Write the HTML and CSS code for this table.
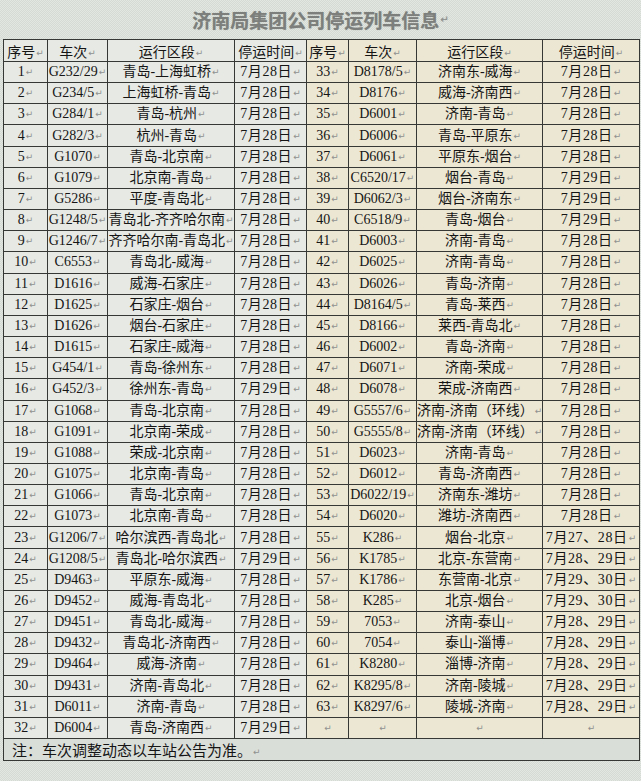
FILE: index.html
```
<!DOCTYPE html>
<html lang="zh-CN">
<head>
<meta charset="utf-8">
<title>济南局集团公司停运列车信息</title>
<link rel="stylesheet" href="styles.css">
</head>
<body>
<div class="title">济南局集团公司停运列车信息<span class="pm">↵</span></div>
<table class="sheet">
<colgroup>
<col class="c1"><col class="c2"><col class="c3"><col class="c4"><col class="c5"><col class="c6"><col class="c7"><col class="c8">
</colgroup>
<thead>
<tr class="head">
<th class="l">序号<span class="pm">↵</span></th><th class="l">车次<span class="pm">↵</span></th><th class="l">运行区段<span class="pm">↵</span></th><th class="l">停运时间<span class="pm">↵</span></th>
<th class="r">序号<span class="pm">↵</span></th><th class="r">车次<span class="pm">↵</span></th><th class="r">运行区段<span class="pm">↵</span></th><th class="r">停运时间<span class="pm">↵</span></th>
</tr>
</thead>
<tbody>
<tr><td class="l">1<span class="pm">↵</span></td><td class="l">G232/29<span class="pm">↵</span></td><td class="l">青岛-上海虹桥<span class="pm">↵</span></td><td class="l">7月28日<span class="pm">↵</span></td><td class="r">33<span class="pm">↵</span></td><td class="r">D8178/5<span class="pm">↵</span></td><td class="r">济南东-威海<span class="pm">↵</span></td><td class="r">7月28日<span class="pm">↵</span></td></tr>
<tr><td class="l">2<span class="pm">↵</span></td><td class="l">G234/5<span class="pm">↵</span></td><td class="l">上海虹桥-青岛<span class="pm">↵</span></td><td class="l">7月28日<span class="pm">↵</span></td><td class="r">34<span class="pm">↵</span></td><td class="r">D8176<span class="pm">↵</span></td><td class="r">威海-济南西<span class="pm">↵</span></td><td class="r">7月28日<span class="pm">↵</span></td></tr>
<tr><td class="l">3<span class="pm">↵</span></td><td class="l">G284/1<span class="pm">↵</span></td><td class="l">青岛-杭州<span class="pm">↵</span></td><td class="l">7月28日<span class="pm">↵</span></td><td class="r">35<span class="pm">↵</span></td><td class="r">D6001<span class="pm">↵</span></td><td class="r">济南-青岛<span class="pm">↵</span></td><td class="r">7月28日<span class="pm">↵</span></td></tr>
<tr><td class="l">4<span class="pm">↵</span></td><td class="l">G282/3<span class="pm">↵</span></td><td class="l">杭州-青岛<span class="pm">↵</span></td><td class="l">7月28日<span class="pm">↵</span></td><td class="r">36<span class="pm">↵</span></td><td class="r">D6006<span class="pm">↵</span></td><td class="r">青岛-平原东<span class="pm">↵</span></td><td class="r">7月28日<span class="pm">↵</span></td></tr>
<tr><td class="l">5<span class="pm">↵</span></td><td class="l">G1070<span class="pm">↵</span></td><td class="l">青岛-北京南<span class="pm">↵</span></td><td class="l">7月28日<span class="pm">↵</span></td><td class="r">37<span class="pm">↵</span></td><td class="r">D6061<span class="pm">↵</span></td><td class="r">平原东-烟台<span class="pm">↵</span></td><td class="r">7月28日<span class="pm">↵</span></td></tr>
<tr><td class="l">6<span class="pm">↵</span></td><td class="l">G1079<span class="pm">↵</span></td><td class="l">北京南-青岛<span class="pm">↵</span></td><td class="l">7月28日<span class="pm">↵</span></td><td class="r">38<span class="pm">↵</span></td><td class="r">C6520/17<span class="pm">↵</span></td><td class="r">烟台-青岛<span class="pm">↵</span></td><td class="r">7月29日<span class="pm">↵</span></td></tr>
<tr><td class="l">7<span class="pm">↵</span></td><td class="l">G5286<span class="pm">↵</span></td><td class="l">平度-青岛北<span class="pm">↵</span></td><td class="l">7月28日<span class="pm">↵</span></td><td class="r">39<span class="pm">↵</span></td><td class="r">D6062/3<span class="pm">↵</span></td><td class="r">烟台-济南东<span class="pm">↵</span></td><td class="r">7月29日<span class="pm">↵</span></td></tr>
<tr><td class="l">8<span class="pm">↵</span></td><td class="l">G1248/5<span class="pm">↵</span></td><td class="l">青岛北-齐齐哈尔南<span class="pm">↵</span></td><td class="l">7月28日<span class="pm">↵</span></td><td class="r">40<span class="pm">↵</span></td><td class="r">C6518/9<span class="pm">↵</span></td><td class="r">青岛-烟台<span class="pm">↵</span></td><td class="r">7月29日<span class="pm">↵</span></td></tr>
<tr><td class="l">9<span class="pm">↵</span></td><td class="l">G1246/7<span class="pm">↵</span></td><td class="l">齐齐哈尔南-青岛北<span class="pm">↵</span></td><td class="l">7月28日<span class="pm">↵</span></td><td class="r">41<span class="pm">↵</span></td><td class="r">D6003<span class="pm">↵</span></td><td class="r">济南-青岛<span class="pm">↵</span></td><td class="r">7月28日<span class="pm">↵</span></td></tr>
<tr><td class="l">10<span class="pm">↵</span></td><td class="l">C6553<span class="pm">↵</span></td><td class="l">青岛北-威海<span class="pm">↵</span></td><td class="l">7月28日<span class="pm">↵</span></td><td class="r">42<span class="pm">↵</span></td><td class="r">D6025<span class="pm">↵</span></td><td class="r">济南-青岛<span class="pm">↵</span></td><td class="r">7月28日<span class="pm">↵</span></td></tr>
<tr><td class="l">11<span class="pm">↵</span></td><td class="l">D1616<span class="pm">↵</span></td><td class="l">威海-石家庄<span class="pm">↵</span></td><td class="l">7月28日<span class="pm">↵</span></td><td class="r">43<span class="pm">↵</span></td><td class="r">D6026<span class="pm">↵</span></td><td class="r">青岛-济南<span class="pm">↵</span></td><td class="r">7月28日<span class="pm">↵</span></td></tr>
<tr><td class="l">12<span class="pm">↵</span></td><td class="l">D1625<span class="pm">↵</span></td><td class="l">石家庄-烟台<span class="pm">↵</span></td><td class="l">7月28日<span class="pm">↵</span></td><td class="r">44<span class="pm">↵</span></td><td class="r">D8164/5<span class="pm">↵</span></td><td class="r">青岛-莱西<span class="pm">↵</span></td><td class="r">7月28日<span class="pm">↵</span></td></tr>
<tr><td class="l">13<span class="pm">↵</span></td><td class="l">D1626<span class="pm">↵</span></td><td class="l">烟台-石家庄<span class="pm">↵</span></td><td class="l">7月28日<span class="pm">↵</span></td><td class="r">45<span class="pm">↵</span></td><td class="r">D8166<span class="pm">↵</span></td><td class="r">莱西-青岛北<span class="pm">↵</span></td><td class="r">7月28日<span class="pm">↵</span></td></tr>
<tr><td class="l">14<span class="pm">↵</span></td><td class="l">D1615<span class="pm">↵</span></td><td class="l">石家庄-威海<span class="pm">↵</span></td><td class="l">7月28日<span class="pm">↵</span></td><td class="r">46<span class="pm">↵</span></td><td class="r">D6002<span class="pm">↵</span></td><td class="r">青岛-济南<span class="pm">↵</span></td><td class="r">7月28日<span class="pm">↵</span></td></tr>
<tr><td class="l">15<span class="pm">↵</span></td><td class="l">G454/1<span class="pm">↵</span></td><td class="l">青岛-徐州东<span class="pm">↵</span></td><td class="l">7月28日<span class="pm">↵</span></td><td class="r">47<span class="pm">↵</span></td><td class="r">D6071<span class="pm">↵</span></td><td class="r">济南-荣成<span class="pm">↵</span></td><td class="r">7月28日<span class="pm">↵</span></td></tr>
<tr><td class="l">16<span class="pm">↵</span></td><td class="l">G452/3<span class="pm">↵</span></td><td class="l">徐州东-青岛<span class="pm">↵</span></td><td class="l">7月29日<span class="pm">↵</span></td><td class="r">48<span class="pm">↵</span></td><td class="r">D6078<span class="pm">↵</span></td><td class="r">荣成-济南西<span class="pm">↵</span></td><td class="r">7月28日<span class="pm">↵</span></td></tr>
<tr><td class="l">17<span class="pm">↵</span></td><td class="l">G1068<span class="pm">↵</span></td><td class="l">青岛-北京南<span class="pm">↵</span></td><td class="l">7月28日<span class="pm">↵</span></td><td class="r">49<span class="pm">↵</span></td><td class="r">G5557/6<span class="pm">↵</span></td><td class="r">济南-济南（环线）<span class="pm">↵</span></td><td class="r">7月28日<span class="pm">↵</span></td></tr>
<tr><td class="l">18<span class="pm">↵</span></td><td class="l">G1091<span class="pm">↵</span></td><td class="l">北京南-荣成<span class="pm">↵</span></td><td class="l">7月28日<span class="pm">↵</span></td><td class="r">50<span class="pm">↵</span></td><td class="r">G5555/8<span class="pm">↵</span></td><td class="r">济南-济南（环线）<span class="pm">↵</span></td><td class="r">7月28日<span class="pm">↵</span></td></tr>
<tr><td class="l">19<span class="pm">↵</span></td><td class="l">G1088<span class="pm">↵</span></td><td class="l">荣成-北京南<span class="pm">↵</span></td><td class="l">7月28日<span class="pm">↵</span></td><td class="r">51<span class="pm">↵</span></td><td class="r">D6023<span class="pm">↵</span></td><td class="r">济南-青岛<span class="pm">↵</span></td><td class="r">7月28日<span class="pm">↵</span></td></tr>
<tr><td class="l">20<span class="pm">↵</span></td><td class="l">G1075<span class="pm">↵</span></td><td class="l">北京南-青岛<span class="pm">↵</span></td><td class="l">7月28日<span class="pm">↵</span></td><td class="r">52<span class="pm">↵</span></td><td class="r">D6012<span class="pm">↵</span></td><td class="r">青岛-济南西<span class="pm">↵</span></td><td class="r">7月28日<span class="pm">↵</span></td></tr>
<tr><td class="l">21<span class="pm">↵</span></td><td class="l">G1066<span class="pm">↵</span></td><td class="l">青岛-北京南<span class="pm">↵</span></td><td class="l">7月28日<span class="pm">↵</span></td><td class="r">53<span class="pm">↵</span></td><td class="r">D6022/19<span class="pm">↵</span></td><td class="r">济南东-潍坊<span class="pm">↵</span></td><td class="r">7月28日<span class="pm">↵</span></td></tr>
<tr><td class="l">22<span class="pm">↵</span></td><td class="l">G1073<span class="pm">↵</span></td><td class="l">北京南-青岛<span class="pm">↵</span></td><td class="l">7月28日<span class="pm">↵</span></td><td class="r">54<span class="pm">↵</span></td><td class="r">D6020<span class="pm">↵</span></td><td class="r">潍坊-济南西<span class="pm">↵</span></td><td class="r">7月28日<span class="pm">↵</span></td></tr>
<tr><td class="l">23<span class="pm">↵</span></td><td class="l">G1206/7<span class="pm">↵</span></td><td class="l">哈尔滨西-青岛北<span class="pm">↵</span></td><td class="l">7月28日<span class="pm">↵</span></td><td class="r">55<span class="pm">↵</span></td><td class="r">K286<span class="pm">↵</span></td><td class="r">烟台-北京<span class="pm">↵</span></td><td class="r">7月27、28日<span class="pm">↵</span></td></tr>
<tr><td class="l">24<span class="pm">↵</span></td><td class="l">G1208/5<span class="pm">↵</span></td><td class="l">青岛北-哈尔滨西<span class="pm">↵</span></td><td class="l">7月29日<span class="pm">↵</span></td><td class="r">56<span class="pm">↵</span></td><td class="r">K1785<span class="pm">↵</span></td><td class="r">北京-东营南<span class="pm">↵</span></td><td class="r">7月28、29日<span class="pm">↵</span></td></tr>
<tr><td class="l">25<span class="pm">↵</span></td><td class="l">D9463<span class="pm">↵</span></td><td class="l">平原东-威海<span class="pm">↵</span></td><td class="l">7月28日<span class="pm">↵</span></td><td class="r">57<span class="pm">↵</span></td><td class="r">K1786<span class="pm">↵</span></td><td class="r">东营南-北京<span class="pm">↵</span></td><td class="r">7月29、30日<span class="pm">↵</span></td></tr>
<tr><td class="l">26<span class="pm">↵</span></td><td class="l">D9452<span class="pm">↵</span></td><td class="l">威海-青岛北<span class="pm">↵</span></td><td class="l">7月28日<span class="pm">↵</span></td><td class="r">58<span class="pm">↵</span></td><td class="r">K285<span class="pm">↵</span></td><td class="r">北京-烟台<span class="pm">↵</span></td><td class="r">7月29、30日<span class="pm">↵</span></td></tr>
<tr><td class="l">27<span class="pm">↵</span></td><td class="l">D9451<span class="pm">↵</span></td><td class="l">青岛北-威海<span class="pm">↵</span></td><td class="l">7月28日<span class="pm">↵</span></td><td class="r">59<span class="pm">↵</span></td><td class="r">7053<span class="pm">↵</span></td><td class="r">济南-泰山<span class="pm">↵</span></td><td class="r">7月28、29日<span class="pm">↵</span></td></tr>
<tr><td class="l">28<span class="pm">↵</span></td><td class="l">D9432<span class="pm">↵</span></td><td class="l">青岛北-济南西<span class="pm">↵</span></td><td class="l">7月28日<span class="pm">↵</span></td><td class="r">60<span class="pm">↵</span></td><td class="r">7054<span class="pm">↵</span></td><td class="r">泰山-淄博<span class="pm">↵</span></td><td class="r">7月28、29日<span class="pm">↵</span></td></tr>
<tr><td class="l">29<span class="pm">↵</span></td><td class="l">D9464<span class="pm">↵</span></td><td class="l">威海-济南<span class="pm">↵</span></td><td class="l">7月28日<span class="pm">↵</span></td><td class="r">61<span class="pm">↵</span></td><td class="r">K8280<span class="pm">↵</span></td><td class="r">淄博-济南<span class="pm">↵</span></td><td class="r">7月28、29日<span class="pm">↵</span></td></tr>
<tr><td class="l">30<span class="pm">↵</span></td><td class="l">D9431<span class="pm">↵</span></td><td class="l">济南-青岛北<span class="pm">↵</span></td><td class="l">7月28日<span class="pm">↵</span></td><td class="r">62<span class="pm">↵</span></td><td class="r">K8295/8<span class="pm">↵</span></td><td class="r">济南-陵城<span class="pm">↵</span></td><td class="r">7月28、29日<span class="pm">↵</span></td></tr>
<tr><td class="l">31<span class="pm">↵</span></td><td class="l">D6011<span class="pm">↵</span></td><td class="l">济南-青岛<span class="pm">↵</span></td><td class="l">7月28日<span class="pm">↵</span></td><td class="r">63<span class="pm">↵</span></td><td class="r">K8297/6<span class="pm">↵</span></td><td class="r">陵城-济南<span class="pm">↵</span></td><td class="r">7月28、29日<span class="pm">↵</span></td></tr>
<tr><td class="l">32<span class="pm">↵</span></td><td class="l">D6004<span class="pm">↵</span></td><td class="l">青岛-济南西<span class="pm">↵</span></td><td class="l">7月29日<span class="pm">↵</span></td><td class="r"><span class="pm">↵</span></td><td class="r"><span class="pm">↵</span></td><td class="r"><span class="pm">↵</span></td><td class="r"><span class="pm">↵</span></td></tr>
<tr class="note"><td colspan="8">注：车次调整动态以车站公告为准。<span class="pm">↵</span></td></tr>
</tbody>
</table>
</body>
</html>
```
FILE: styles.css
```
html, body {
  margin: 0;
  padding: 0;
}
body {
  width: 641px;
  height: 781px;
  overflow: hidden;
  background: repeating-conic-gradient(#d5dad4 0 25%, #e3e7e2 0 50%) 0 0 / 2px 2px;
  font-family: "Liberation Serif", "Noto Sans CJK SC", serif;
  color: #151515;
}
.title {
  height: 39px;
  display: flex;
  align-items: center;
  justify-content: center;
  font-family: "Noto Sans CJK SC", sans-serif;
  font-weight: 700;
  font-size: 19px;
  color: #7c7f7c;
  text-shadow: 0 0 1px #9a9d9a;
}
.title .pm {
  font-size: 10px;
  font-weight: 400;
}
.pm {
  font-family: "DejaVu Sans", sans-serif;
  font-size: 9px;
  letter-spacing: 0;
  color: #8f918f;
  margin-left: 1px;
  vertical-align: 1px;
}
.sheet {
  margin-left: 3px;
  width: 636px;
  border-collapse: collapse;
  table-layout: fixed;
}
.c1 { width: 44px; }
.c2 { width: 60px; }
.c3 { width: 127px; }
.c4 { width: 72px; }
.c5 { width: 42px; }
.c6 { width: 68px; }
.c7 { width: 126px; }
.c8 { width: 97px; }
.sheet th,
.sheet td {
  border: 1px solid #363836;
  padding: 0;
  text-align: center;
  white-space: nowrap;
  overflow: hidden;
  font-size: 14px;
  font-weight: 400;
  line-height: 1;
}
.sheet th {
  font-family: "Noto Sans CJK SC", sans-serif;
  font-size: 14px;
}
.sheet td:nth-child(4),
.sheet td:nth-child(8) {
  letter-spacing: 0.6px;
}
.head {
  height: 22px;
}
tbody tr {
  height: 21.16px;
}
.sheet .l {
  background: repeating-conic-gradient(#dfe3de 0 25%, #eceee9 0 50%) 0 0 / 2px 2px;
}
.sheet .r {
  background: repeating-conic-gradient(#e6e1cb 0 25%, #f1eddb 0 50%) 0 0 / 2px 2px;
}
.sheet .note {
  height: 22px;
}
.note td {
  text-align: left;
  padding-left: 8px;
  font-family: "Noto Sans CJK SC", sans-serif;
  font-size: 15px;
  background: repeating-conic-gradient(#d3d8d2 0 25%, #e0e4df 0 50%) 0 0 / 2px 2px;
}
```
